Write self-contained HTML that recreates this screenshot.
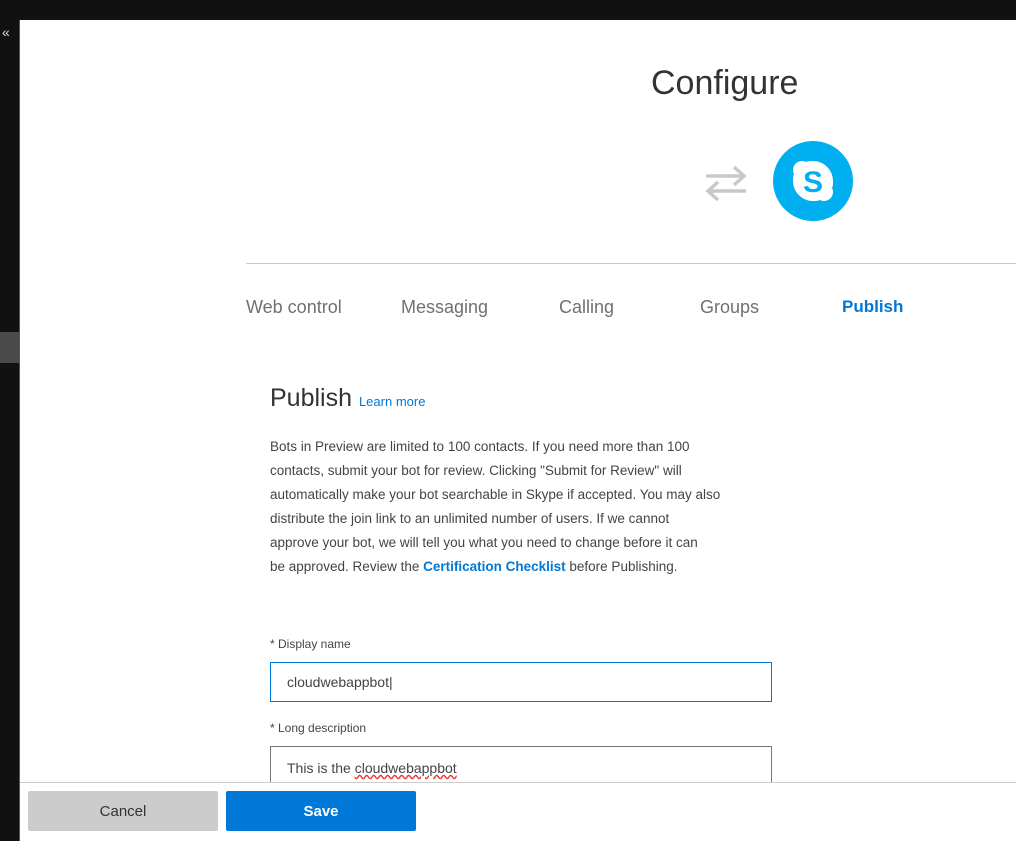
<!DOCTYPE html>
<html><head><style>
*{margin:0;padding:0;box-sizing:border-box}
body{width:1016px;height:841px;overflow:hidden;background:#fff;position:relative;font-family:"Liberation Sans",sans-serif;color:#333}
.a{position:absolute;white-space:nowrap}
</style></head><body>
<div class="a" style="left:0;top:0;width:1016px;height:20px;background:#111"></div>
<div class="a" style="left:0;top:20px;width:19px;height:821px;background:#111"></div>
<div class="a" style="left:19px;top:20px;width:1px;height:821px;background:#555"></div>
<div class="a" style="left:0;top:332px;width:19px;height:31px;background:#4a4a4a"></div>
<div class="a" style="left:2px;top:24px;color:#ddd;font-size:14px">«</div>

<div class="a" style="left:651px;top:64px;font-size:34px;color:#333">Configure</div>
<svg class="a" style="left:704px;top:164px" width="44" height="38" viewBox="0 0 44 38"><g stroke="#c8c8c8" stroke-width="3.5" fill="none"><path d="M2 12H40M30 3L40 12L30 21"/><path d="M42 27H4M14 18L4 27L14 36"/></g></svg>
<svg class="a" style="left:773px;top:141px" width="80" height="80" viewBox="0 0 80 80"><circle cx="40" cy="40" r="40" fill="#00aff0"/><path d="M29 20c-5 0-9 4-9 9 0 1 0 2 1 4-1 2-1 4-1 7 0 11 9 20 20 20 3 0 5 0 7-1 2 1 3 1 4 1 5 0 9-4 9-9 0-1 0-2-1-4 1-2 1-4 1-7 0-11-9-20-20-20-3 0-5 0-7 1-2-1-3-1-4-1z" fill="#fff"/><text x="40" y="51" text-anchor="middle" font-family="Liberation Sans" font-weight="bold" font-size="30" fill="#00aff0">S</text></svg>

<div class="a" style="left:246px;top:263px;width:770px;height:1px;background:#c8c8c8"></div>
<div class="a" style="top:297px;font-size:18px;color:#707070;left:246px">Web control</div>
<div class="a" style="top:297px;font-size:18px;color:#707070;left:401px">Messaging</div>
<div class="a" style="top:297px;font-size:18px;color:#707070;left:559px">Calling</div>
<div class="a" style="top:297px;font-size:18px;color:#707070;left:700px">Groups</div>
<div class="a" style="top:297px;font-size:17px;color:#0078d7;left:842px;font-weight:bold">Publish</div>

<div class="a" style="left:270px;top:384px;font-size:25px;color:#333">Publish <span style="font-size:13px;color:#0078d7">Learn more</span></div>
<div class="a" style="left:270px;top:435px;font-size:13.5px;line-height:24px;color:#444">Bots in Preview are limited to 100 contacts. If you need more than 100<br>contacts, submit your bot for review. Clicking "Submit for Review" will<br>automatically make your bot searchable in Skype if accepted. You may also<br>distribute the join link to an unlimited number of users. If we cannot<br>approve your bot, we will tell you what you need to change before it can<br>be approved. Review the <b style="color:#0078d7">Certification Checklist</b> before Publishing.</div>

<div class="a" style="left:270px;top:637px;font-size:12px;color:#444">* Display name</div>
<div class="a" style="left:270px;top:662px;width:502px;height:40px;border:1px solid #0078d7;padding:11px 16px;font-size:14px;color:#444">cloudwebappbot|</div>
<div class="a" style="left:270px;top:721px;font-size:12px;color:#444">* Long description</div>
<div class="a" style="left:270px;top:746px;width:502px;height:50px;border:1px solid #777;padding:13px 16px;font-size:14px;color:#444">This is the <span style="text-decoration:underline wavy #e33">cloudwebappbot</span></div>

<div class="a" style="left:20px;top:782px;width:996px;height:59px;background:#fff;border-top:1px solid #ccc"></div>
<div class="a" style="left:28px;top:791px;width:190px;height:40px;background:#ccc;border-radius:2px;text-align:center;padding-top:12px;font-size:15px;color:#333">Cancel</div>
<div class="a" style="left:226px;top:791px;width:190px;height:40px;background:#0078d7;border-radius:2px;text-align:center;padding-top:12px;font-size:15px;color:#fff;font-weight:bold">Save</div>
</body></html>
